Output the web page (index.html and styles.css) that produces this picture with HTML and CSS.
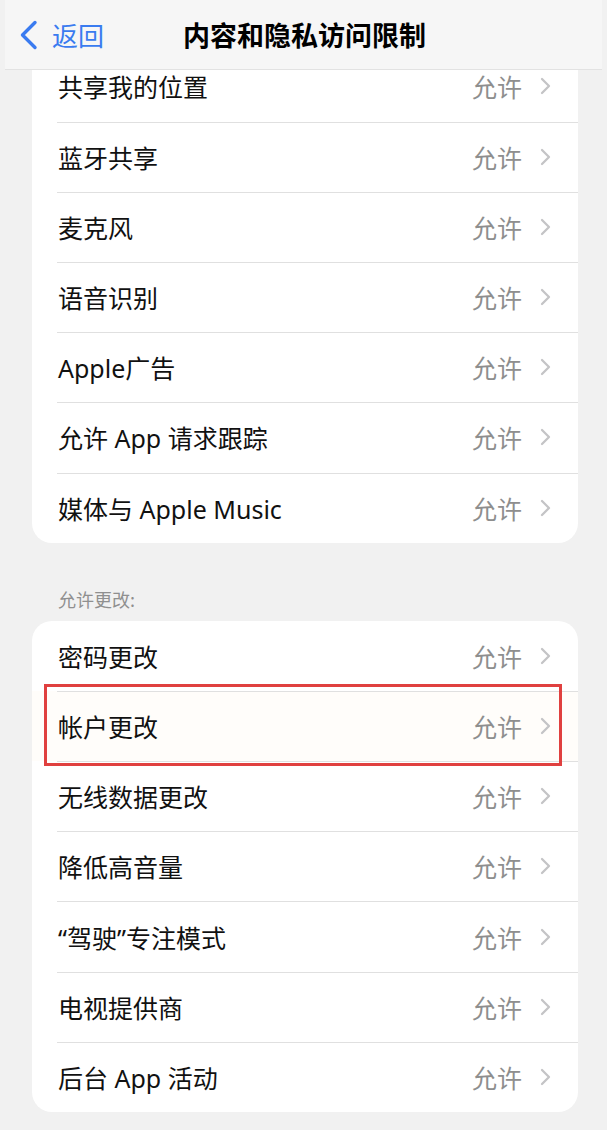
FILE: index.html
```html
<!DOCTYPE html>
<html lang="zh-CN">
  <head>
    <meta charset="UTF-8" />
    <meta name="viewport" content="width=device-width, initial-scale=1.0" />
    <title>内容和隐私访问限制</title>
    <link rel="stylesheet" href="styles.css">
  </head>
  <body>
    <header class="navbar">
      <a class="back" href="#">
        <svg class="back-icon" width="20" height="30" viewBox="0 0 20 30">
          <polyline points="16,2.5 3.5,15 16,27.5" />
        </svg>
        <span>返回</span>
      </a>
      <h1 class="title">内容和隐私访问限制</h1>
    </header>

    <main class="content">
      <ul class="group">
        <li class="row"><span class="label">共享我的位置</span><span class="value">允许</span><svg class="chevron" width="12" height="18" viewBox="0 0 12 18"><polyline points="2,2 9,9 2,16" /></svg></li>
        <li class="row"><span class="label">蓝牙共享</span><span class="value">允许</span><svg class="chevron" width="12" height="18" viewBox="0 0 12 18"><polyline points="2,2 9,9 2,16" /></svg></li>
        <li class="row"><span class="label">麦克风</span><span class="value">允许</span><svg class="chevron" width="12" height="18" viewBox="0 0 12 18"><polyline points="2,2 9,9 2,16" /></svg></li>
        <li class="row"><span class="label">语音识别</span><span class="value">允许</span><svg class="chevron" width="12" height="18" viewBox="0 0 12 18"><polyline points="2,2 9,9 2,16" /></svg></li>
        <li class="row"><span class="label">Apple广告</span><span class="value">允许</span><svg class="chevron" width="12" height="18" viewBox="0 0 12 18"><polyline points="2,2 9,9 2,16" /></svg></li>
        <li class="row"><span class="label">允许 App 请求跟踪</span><span class="value">允许</span><svg class="chevron" width="12" height="18" viewBox="0 0 12 18"><polyline points="2,2 9,9 2,16" /></svg></li>
        <li class="row"><span class="label">媒体与 Apple Music</span><span class="value">允许</span><svg class="chevron" width="12" height="18" viewBox="0 0 12 18"><polyline points="2,2 9,9 2,16" /></svg></li>
      </ul>

      <div class="section-title">允许更改:</div>
      <ul class="group">
        <li class="row"><span class="label">密码更改</span><span class="value">允许</span><svg class="chevron" width="12" height="18" viewBox="0 0 12 18"><polyline points="2,2 9,9 2,16" /></svg></li>
        <li class="row marked"><span class="label">帐户更改</span><span class="value">允许</span><svg class="chevron" width="12" height="18" viewBox="0 0 12 18"><polyline points="2,2 9,9 2,16" /></svg></li>
        <li class="row"><span class="label">无线数据更改</span><span class="value">允许</span><svg class="chevron" width="12" height="18" viewBox="0 0 12 18"><polyline points="2,2 9,9 2,16" /></svg></li>
        <li class="row"><span class="label">降低高音量</span><span class="value">允许</span><svg class="chevron" width="12" height="18" viewBox="0 0 12 18"><polyline points="2,2 9,9 2,16" /></svg></li>
        <li class="row"><span class="label">“驾驶”专注模式</span><span class="value">允许</span><svg class="chevron" width="12" height="18" viewBox="0 0 12 18"><polyline points="2,2 9,9 2,16" /></svg></li>
        <li class="row"><span class="label">电视提供商</span><span class="value">允许</span><svg class="chevron" width="12" height="18" viewBox="0 0 12 18"><polyline points="2,2 9,9 2,16" /></svg></li>
        <li class="row"><span class="label">后台 App 活动</span><span class="value">允许</span><svg class="chevron" width="12" height="18" viewBox="0 0 12 18"><polyline points="2,2 9,9 2,16" /></svg></li>
      </ul>
    </main>
  </body>
</html>
```

FILE: styles.css
```css
* {
  margin: 0;
  padding: 0;
  box-sizing: border-box;
}
body {
  font-family: "Noto Sans CJK SC", "Noto Sans", sans-serif;
  background-color: #f1f1f1;
  color: #111;
}

/* top bar stays over the scrolled list */
.navbar {
  position: fixed;
  top: 0;
  left: 5px;
  right: 5px;
  height: 70px;
  background-color: #f6f6f6;
  border-bottom: 1px solid #e2e2e2;
  display: flex;
  align-items: center;
  justify-content: center;
  z-index: 10;
}
.back {
  position: absolute;
  left: 14px;
  top: 20px;
  display: flex;
  align-items: center;
  gap: 13px;
  color: #3a7bf0;
  text-decoration: none;
  font-size: 26px;
  line-height: 30px;
}
.back-icon polyline {
  fill: none;
  stroke: #3a7bf0;
  stroke-width: 3.4;
  stroke-linecap: round;
  stroke-linejoin: round;
}
.title {
  font-size: 27px;
  font-weight: bold;
  color: #000;
  margin-left: 2px;
}

.content {
  padding: 51.4px 29px 20px 32px;
}
.group {
  list-style: none;
  background-color: #fff;
  border-radius: 20px;
  overflow: hidden;
}
.row {
  position: relative;
  height: 70.2px;
  display: flex;
  align-items: center;
  padding: 0 26px 0 26px;
}
.row + .row::before {
  content: "";
  position: absolute;
  top: 0;
  left: 25px;
  right: 0;
  border-top: 1px solid #e0e0e0;
}
.label {
  flex: 1;
  font-family: "Noto Sans", "Noto Sans CJK SC", sans-serif;
  font-size: 25px;
  color: #111;
}
.value {
  font-size: 25px;
  color: #8e8e8e;
  margin-right: 18px;
}
.chevron polyline {
  fill: none;
  stroke: #c4c4c6;
  stroke-width: 2.3;
  stroke-linecap: round;
  stroke-linejoin: round;
}

.section-title {
  font-size: 18px;
  line-height: 22px;
  color: #8f8f8f;
  padding: 45px 0 11px 26px;
}

/* red outline drawn over the account row */
.marked {
  background-color: #fffdfa;
  overflow: visible;
}
.marked::after {
  content: "";
  position: absolute;
  top: -7px;
  bottom: -5px;
  left: 12px;
  right: 16px;
  border: 3px solid #e0403f;
  z-index: 2;
}
```
